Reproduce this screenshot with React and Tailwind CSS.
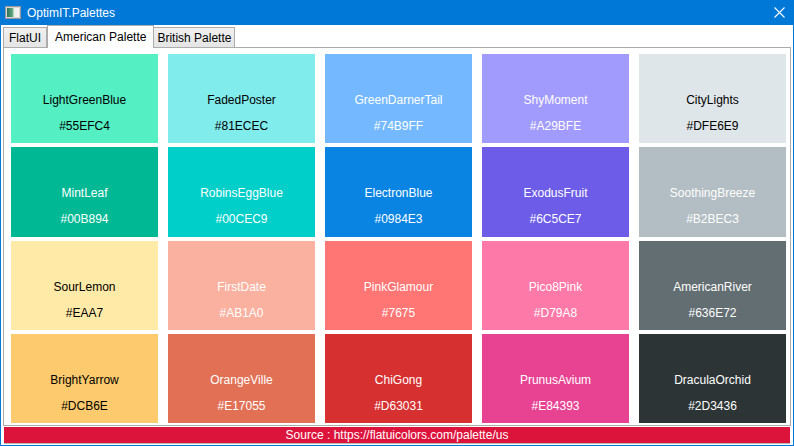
import React from "react";

const palette = [
  { name: "LightGreenBlue", hex: "#55EFC4", bg: "bg-[#55efc4]", dark: true },
  { name: "FadedPoster", hex: "#81ECEC", bg: "bg-[#81ecec]", dark: true },
  { name: "GreenDarnerTail", hex: "#74B9FF", bg: "bg-[#74b9ff]" },
  { name: "ShyMoment", hex: "#A29BFE", bg: "bg-[#a29bfe]" },
  { name: "CityLights", hex: "#DFE6E9", bg: "bg-[#dfe6e9]", dark: true },
  { name: "MintLeaf", hex: "#00B894", bg: "bg-[#00b894]" },
  { name: "RobinsEggBlue", hex: "#00CEC9", bg: "bg-[#00cec9]" },
  { name: "ElectronBlue", hex: "#0984E3", bg: "bg-[#0984e3]" },
  { name: "ExodusFruit", hex: "#6C5CE7", bg: "bg-[#6c5ce7]" },
  { name: "SoothingBreeze", hex: "#B2BEC3", bg: "bg-[#b2bec3]" },
  { name: "SourLemon", hex: "#EAA7", bg: "bg-[#ffeaa7]", dark: true },
  { name: "FirstDate", hex: "#AB1A0", bg: "bg-[#fab1a0]" },
  { name: "PinkGlamour", hex: "#7675", bg: "bg-[#ff7675]" },
  { name: "Pico8Pink", hex: "#D79A8", bg: "bg-[#fd79a8]" },
  { name: "AmericanRiver", hex: "#636E72", bg: "bg-[#636e72]" },
  { name: "BrightYarrow", hex: "#DCB6E", bg: "bg-[#fdcb6e]", dark: true },
  { name: "OrangeVille", hex: "#E17055", bg: "bg-[#e17055]" },
  { name: "ChiGong", hex: "#D63031", bg: "bg-[#d63031]" },
  { name: "PrunusAvium", hex: "#E84393", bg: "bg-[#e84393]" },
  { name: "DraculaOrchid", hex: "#2D3436", bg: "bg-[#2d3436]" },
];

const AppIcon = () => (
  <svg width="16" height="13" viewBox="0 0 16 13">
    <defs>
      <linearGradient id="pic" x1="0" x2="1" y1="0" y2="0">
        <stop offset="0" stopColor="#2f6f5a" />
        <stop offset="0.45" stopColor="#5fa77e" />
        <stop offset="0.6" stopColor="#e8efe9" />
        <stop offset="1" stopColor="#f7f7f7" />
      </linearGradient>
    </defs>
    <rect x="0.5" y="0.5" width="15" height="12" fill="#d6d6d6" stroke="#9a9a9a" />
    <rect x="2" y="2" width="12" height="9" fill="url(#pic)" />
  </svg>
);

const Tab = ({ label, active, pad = "px-[5px]" }) =>
  active ? (
    <div className="h-[23px] -mb-px px-[7px] flex items-center bg-white border border-b-0 border-[#acacac] text-black z-10 relative">
      {label}
    </div>
  ) : (
    <div className={`h-[21px] mt-[2px] ${pad} flex items-center bg-gradient-to-b from-[#f0f0f0] to-[#e5e5e5] border border-[#acacac] text-black -mx-px first:mx-0`}>
      {label}
    </div>
  );

export default function App() {
  return (
    <div
      className="w-[794px] h-[446px] bg-white border border-t-0 border-[#0078d7] flex flex-col overflow-hidden text-[12px]"
      style={{ fontFamily: '"Liberation Sans", Arial, sans-serif' }}
    >
      {/* title bar */}
      <div className="h-[25px] bg-[#0078d7] flex items-center pl-[4px] pr-[8px] text-white shrink-0">
        <AppIcon />
        <span className="ml-[6px]">OptimIT.Palettes</span>
        <svg className="ml-auto" width="11" height="11" viewBox="0 0 11 11">
          <path d="M0.5 0.5 L10.5 10.5 M10.5 0.5 L0.5 10.5" stroke="#ffffff" strokeWidth="1.1" />
        </svg>
      </div>

      <div className="flex flex-col px-[2px]">
        {/* tabs */}
        <div className="flex h-[22px] items-start">
          <Tab label="FlatUI" />
          <Tab label="American Palette" active />
          <Tab label="British Palette" pad="px-[3px]" />
        </div>

        {/* panel */}
        <div className="h-[379px] border border-[#acacac] pt-[6px] pl-[7px] pr-[4px] pb-[2px]">
          <div className="grid grid-cols-5 grid-rows-4 gap-x-[10px] gap-y-[4px] h-full">
            {palette.map((c) => (
              <div
                key={c.name}
                className={`${c.bg} flex flex-col items-center pt-[38px] gap-[10px] leading-[16px] ${
                  c.dark ? "text-black" : "text-white"
                }`}
              >
                <span>{c.name}</span>
                <span>{c.hex}</span>
              </div>
            ))}
          </div>
        </div>

        {/* source bar */}
        <div className="mt-[1px] mx-px h-[17px] bg-[#dc143c] border-b border-[#b9b9b9] text-white flex items-center justify-center leading-none">
          Source : https://flatuicolors.com/palette/us
        </div>
      </div>
    </div>
  );
}
